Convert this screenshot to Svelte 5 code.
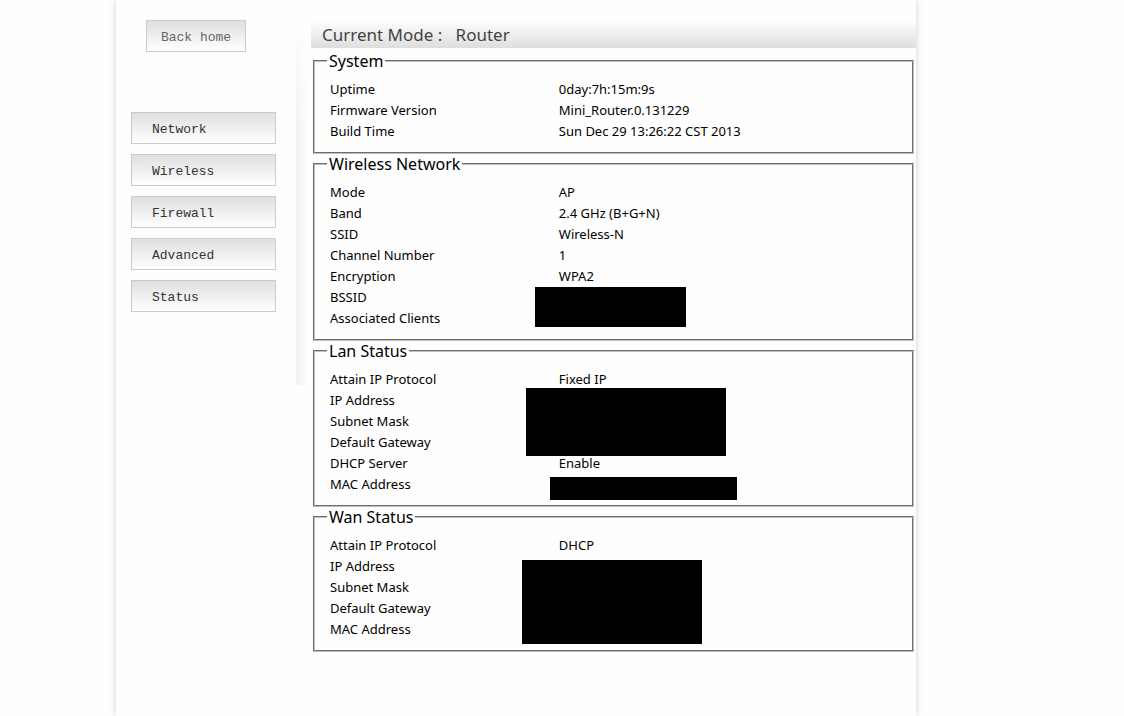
<script lang="ts">
    interface Row {
        label: string;
        value?: string;
    }

    // covered area over the values, relative to the rows
    interface Cover {
        x: number;
        y: number;
        width: number;
        height: number;
    }

    interface Section {
        title: string;
        rows: Row[];
        covers: Cover[];
    }

    const menu = ["Network", "Wireless", "Firewall", "Advanced", "Status"];

    const sections: Section[] = [
        {
            title: "System",
            rows: [
                { label: "Uptime", value: "0day:7h:15m:9s" },
                { label: "Firmware Version", value: "Mini_Router.0.131229" },
                { label: "Build Time", value: "Sun Dec 29 13:26:22 CST 2013" },
            ],
            covers: [],
        },
        {
            title: "Wireless Network",
            rows: [
                { label: "Mode", value: "AP" },
                { label: "Band", value: "2.4 GHz (B+G+N)" },
                { label: "SSID", value: "Wireless-N" },
                { label: "Channel Number", value: "1" },
                { label: "Encryption", value: "WPA2" },
                { label: "BSSID" },
                { label: "Associated Clients" },
            ],
            covers: [{ x: 205, y: 105, width: 151, height: 40 }],
        },
        {
            title: "Lan Status",
            rows: [
                { label: "Attain IP Protocol", value: "Fixed IP" },
                { label: "IP Address" },
                { label: "Subnet Mask" },
                { label: "Default Gateway" },
                { label: "DHCP Server", value: "Enable" },
                { label: "MAC Address" },
            ],
            covers: [
                { x: 196, y: 19, width: 200, height: 68 },
                { x: 220, y: 108, width: 187, height: 23 },
            ],
        },
        {
            title: "Wan Status",
            rows: [
                { label: "Attain IP Protocol", value: "DHCP" },
                { label: "IP Address" },
                { label: "Subnet Mask" },
                { label: "Default Gateway" },
                { label: "MAC Address" },
            ],
            covers: [{ x: 192, y: 25, width: 180, height: 84 }],
        },
    ];
</script>

<div class="page">
    <aside>
        <button class="home">Back home</button>
        <nav>
            {#each menu as item}
                <button>{item}</button>
            {/each}
        </nav>
    </aside>

    <div class="divider"></div>

    <main>
        <h1>Current Mode :&nbsp;&nbsp; Router</h1>

        {#each sections as section}
            <fieldset>
                <legend>{section.title}</legend>
                <div class="rows">
                    <table>
                        <tbody>
                            {#each section.rows as row}
                                <tr>
                                    <th scope="row">{row.label}</th>
                                    <td>{row.value ?? ""}</td>
                                </tr>
                            {/each}
                        </tbody>
                    </table>
                    {#each section.covers as c}
                        <div
                            class="cover"
                            style="left: {c.x}px; top: {c.y}px; width: {c.width}px; height: {c.height}px"
                        ></div>
                    {/each}
                </div>
            </fieldset>
        {/each}
    </main>
</div>

<style>
    :global(body) {
        background: #fefefe;
    }

    .page {
        display: flex;
        align-items: flex-start;
        box-sizing: border-box;
        max-width: 800px;
        min-height: 100vh;
        margin-left: 116px;
        padding-top: 20px;
        background: #fefefe;
        box-shadow: 0 0 6px #ccc;
        font-family: "Noto Sans", "Open Sans", sans-serif;
        color: #000;
    }

    aside {
        flex: 0 0 180px;
    }

    button {
        height: 32px;
        padding: 2px 0 0;
        border: 1px solid #ccc;
        background: linear-gradient(#dfdfdf, #fff);
        font-family: "Liberation Mono", monospace;
        font-size: 13px;
        color: #333;
        cursor: pointer;
    }

    .home {
        display: block;
        width: 100px;
        margin-left: 30px;
        color: #666;
    }

    nav {
        display: flex;
        flex-direction: column;
        gap: 10px;
        margin: 60px 20px 0 15px;
    }

    nav button {
        padding-left: 20px;
        text-align: left;
    }

    .divider {
        flex: 0 0 15px;
        height: 362px;
        margin-top: 3px;
        background:
            linear-gradient(#fefefe, transparent 30%),
            linear-gradient(to right, #f0f0f0, #fefefe 80%);
    }

    main {
        flex: 1;
        min-width: 0;
    }

    h1 {
        margin: 0 0 4px;
        padding: 2px 11px 0;
        background: linear-gradient(#fefefe, #dedede);
        font-size: 17px;
        font-weight: normal;
        line-height: 26px;
        color: #444;
    }

    fieldset {
        min-width: 0;
        margin: 0 2px 1px;
        padding: 9px 15px 10px;
        border: 2px groove #c0c0c0;
    }

    legend {
        margin-left: -3px;
        padding: 0 2px;
        font-size: 16px;
        line-height: 18px;
    }

    .rows {
        position: relative;
    }

    table {
        width: 100%;
        border-collapse: collapse;
        table-layout: fixed;
    }

    th,
    td {
        height: 21px;
        padding: 0;
        font-size: 13px;
        font-weight: normal;
        line-height: 21px;
        text-align: left;
    }

    th {
        width: 40%;
    }

    td {
        padding-left: 2px;
    }

    .cover {
        position: absolute;
        background: #000;
    }
</style>
